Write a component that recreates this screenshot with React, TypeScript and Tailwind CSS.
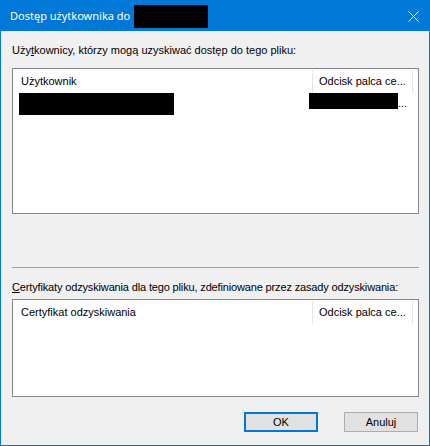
export default function App() {
  return (
    <div className="w-[430px] h-[446px] bg-[#0078d7] p-px flex flex-col">
      {/* title bar */}
      <div className="h-[30px] flex items-center pl-[9px] pr-[10px] text-white text-[11px] font-['Noto_Sans',sans-serif]">
        <span>Dostęp użytkownika do</span>
        <span className="ml-[4px] w-[74px] h-[23px] bg-black" />
        <svg className="ml-auto" width="11" height="11" viewBox="0 0 11 11">
          <path d="M0.5 0.5 L10.5 10.5 M10.5 0.5 L0.5 10.5" stroke="white" strokeWidth="1" />
        </svg>
      </div>

      {/* body */}
      <div className="flex-1 bg-[#f0f0f0] pl-[11px] pr-[10px] text-[11px] text-black font-['Liberation_Sans',Arial,sans-serif]">
        <div className="h-[37px] flex items-end pb-[12px] leading-none">
          Uży<u>t</u>kownicy, którzy mogą uzyskiwać dostęp do tego pliku:
        </div>
        <ListBox height="h-[146px]" first="Użytkownik">
          <div className="flex h-[22px]">
            <div className="w-[300px] pl-[6px]">
              <div className="w-[155px] h-[22px] bg-black" />
            </div>
            <div className="flex items-end">
              <div className="-ml-[4px] w-[89px] h-[16px] bg-black self-start" />
              <span className="leading-none pb-[6px]">...</span>
            </div>
          </div>
        </ListBox>

        <div className="mt-[53px] h-px bg-[#a0a0a0] w-[407px]" />
        <div className="h-[31px] flex items-center pt-[7px] leading-none tracking-[-0.15px]">
          <u>C</u>ertyfikaty odzyskiwania dla tego pliku, zdefiniowane przez zasady odzyskiwania:
        </div>
        <ListBox height="h-[98px]" first="Certyfikat odzyskiwania" />

        <div className="mt-[15px] flex justify-end gap-[26px] pr-px">
          <button className="w-[74px] h-[20px] bg-[#e1e1e1] border-2 border-[#0078d7] text-[11px] leading-none">
            OK
          </button>
          <button className="w-[74px] h-[20px] bg-[#e1e1e1] border border-[#adadad] text-[11px] leading-none">
            Anuluj
          </button>
        </div>
      </div>
    </div>
  );
}

function ListBox({
  height,
  first,
  children,
}: {
  height: string;
  first: string;
  children?: React.ReactNode;
}) {
  return (
    <div className={`${height} w-[407px] bg-white border border-[#828790] flex flex-col`}>
      <div className="flex h-[24px] pt-px">
        <div className="w-[300px] pl-[8px] flex items-center border-r border-[#e5e5e5]">{first}</div>
        <div className="w-[100px] pl-[6px] flex items-center border-r border-[#e5e5e5]">Odcisk palca ce...</div>
      </div>
      {children}
    </div>
  );
}
